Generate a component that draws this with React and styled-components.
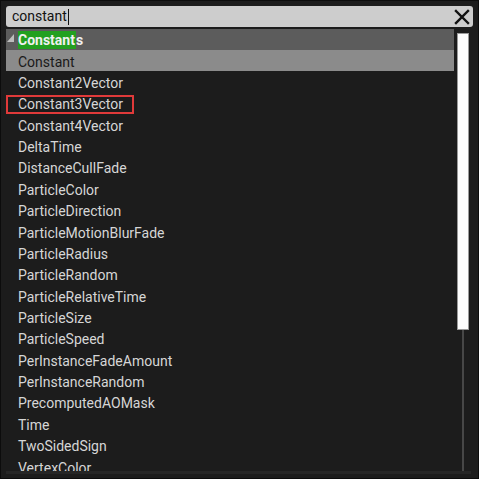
import React from "react";
import styled, { createGlobalStyle } from "styled-components";

const Global = createGlobalStyle`
  html, body { margin: 0; padding: 0; background: #1c1c1c; }
  body { font-family: Roboto, "Noto Sans", sans-serif; }
`;

const Frame = styled.div`
  width: 479px;
  height: 479px;
  box-sizing: border-box;
  background: #1c1c1c;
  border: 1px solid #0c0c0c;
  padding: 5px 5px 0 5px;
  display: flex;
  flex-direction: column;
  overflow: hidden;
`;

const SearchBox = styled.div`
  height: 21px;
  flex: none;
  background: #cdcdcd;
  border-radius: 3px;
  display: flex;
  align-items: center;
  padding: 0 3px 0 6px;
  box-sizing: border-box;
  margin-bottom: 2px;
`;

const SearchText = styled.span`
  font-size: 14px;
  color: #111;
  line-height: 21px;
  flex: 1;
  display: flex;
  align-items: center;
`;

const Caret = styled.span`
  display: inline-block;
  width: 1px;
  height: 16px;
  background: #111;
  margin-left: 1px;
`;

const Body = styled.div`
  flex: 1;
  display: flex;
  min-height: 0;
  border-bottom: 3px solid #262626;
  margin-bottom: 4px;
  margin-right: 2px;
`;

const List = styled.div`
  width: 448px;
  flex: none;
  overflow: hidden;
`;

const HeaderRow = styled.div`
  height: 21px;
  background: #5c5c5c;
  display: flex;
  align-items: center;
  position: relative;
  padding-left: 12px;
`;

const Triangle = styled.svg`
  position: absolute;
  left: 1px;
  top: 5px;
`;

const HeaderLabel = styled.span`
  font-size: 14px;
  font-weight: 700;
  color: #f0f0f0;
  line-height: 18px;
`;

const Match = styled.span`
  background: #22a020;
  padding: 0 1px 0 0;
  display: inline-block;
  height: 18px;
`;

const Row = styled.div`
  height: 21.37px;
  box-sizing: border-box;
  display: flex;
  align-items: center;
  padding: 2px 0 0 12px;
  font-size: 14px;
  color: ${(p) => (p.$selected ? "#1a1a1a" : "#d6d6d6")};
  background: ${(p) => (p.$selected ? "#8b8b8b" : "transparent")};
  white-space: nowrap;
  position: relative;
`;

const Marked = styled.div`
  position: absolute;
  left: 0;
  top: 2px;
  width: 128px;
  height: 19px;
  border: 2px solid #e03a3a;
  box-sizing: border-box;
`;

const ScrollTrack = styled.div`
  flex: 1;
  position: relative;
  display: flex;
  justify-content: center;
`;

const TrackLine = styled.div`
  width: 2px;
  background: #474747;
  margin-top: 4px;
  margin-left: 1px;
`;

const Thumb = styled.div`
  position: absolute;
  top: 4px;
  left: 3px;
  width: 12px;
  height: 297px;
  background: #fdfdfd;
  border: 1px solid #9a9a9a;
  box-sizing: border-box;
`;

const items = [
  "Constant2Vector",
  "Constant3Vector",
  "Constant4Vector",
  "DeltaTime",
  "DistanceCullFade",
  "ParticleColor",
  "ParticleDirection",
  "ParticleMotionBlurFade",
  "ParticleRadius",
  "ParticleRandom",
  "ParticleRelativeTime",
  "ParticleSize",
  "ParticleSpeed",
  "PerInstanceFadeAmount",
  "PerInstanceRandom",
  "PrecomputedAOMask",
  "Time",
  "TwoSidedSign",
  "VertexColor",
];

export default function App() {
  return (
    <>
      <Global />
      <Frame>
        <SearchBox>
          <SearchText>
            constant
            <Caret />
          </SearchText>
          <svg width="16" height="16" viewBox="0 0 16 16">
            <path d="M2 2 L14 14 M14 2 L2 14" stroke="#111" strokeWidth="2.4" strokeLinecap="square" />
          </svg>
        </SearchBox>
        <Body>
          <List>
            <HeaderRow>
              <Triangle width="8" height="9" viewBox="0 0 8 9">
                <polygon points="7,0 7,8 0,8" fill="#bdbdbd" />
              </Triangle>
              <HeaderLabel>
                <Match>Constant</Match>s
              </HeaderLabel>
            </HeaderRow>
            <Row $selected>Constant</Row>
            {items.map((it) => (
              <Row key={it}>
                {it === "Constant3Vector" && <Marked />}
                {it}
              </Row>
            ))}
          </List>
          <ScrollTrack>
            <TrackLine />
            <Thumb />
          </ScrollTrack>
        </Body>
      </Frame>
    </>
  );
}
